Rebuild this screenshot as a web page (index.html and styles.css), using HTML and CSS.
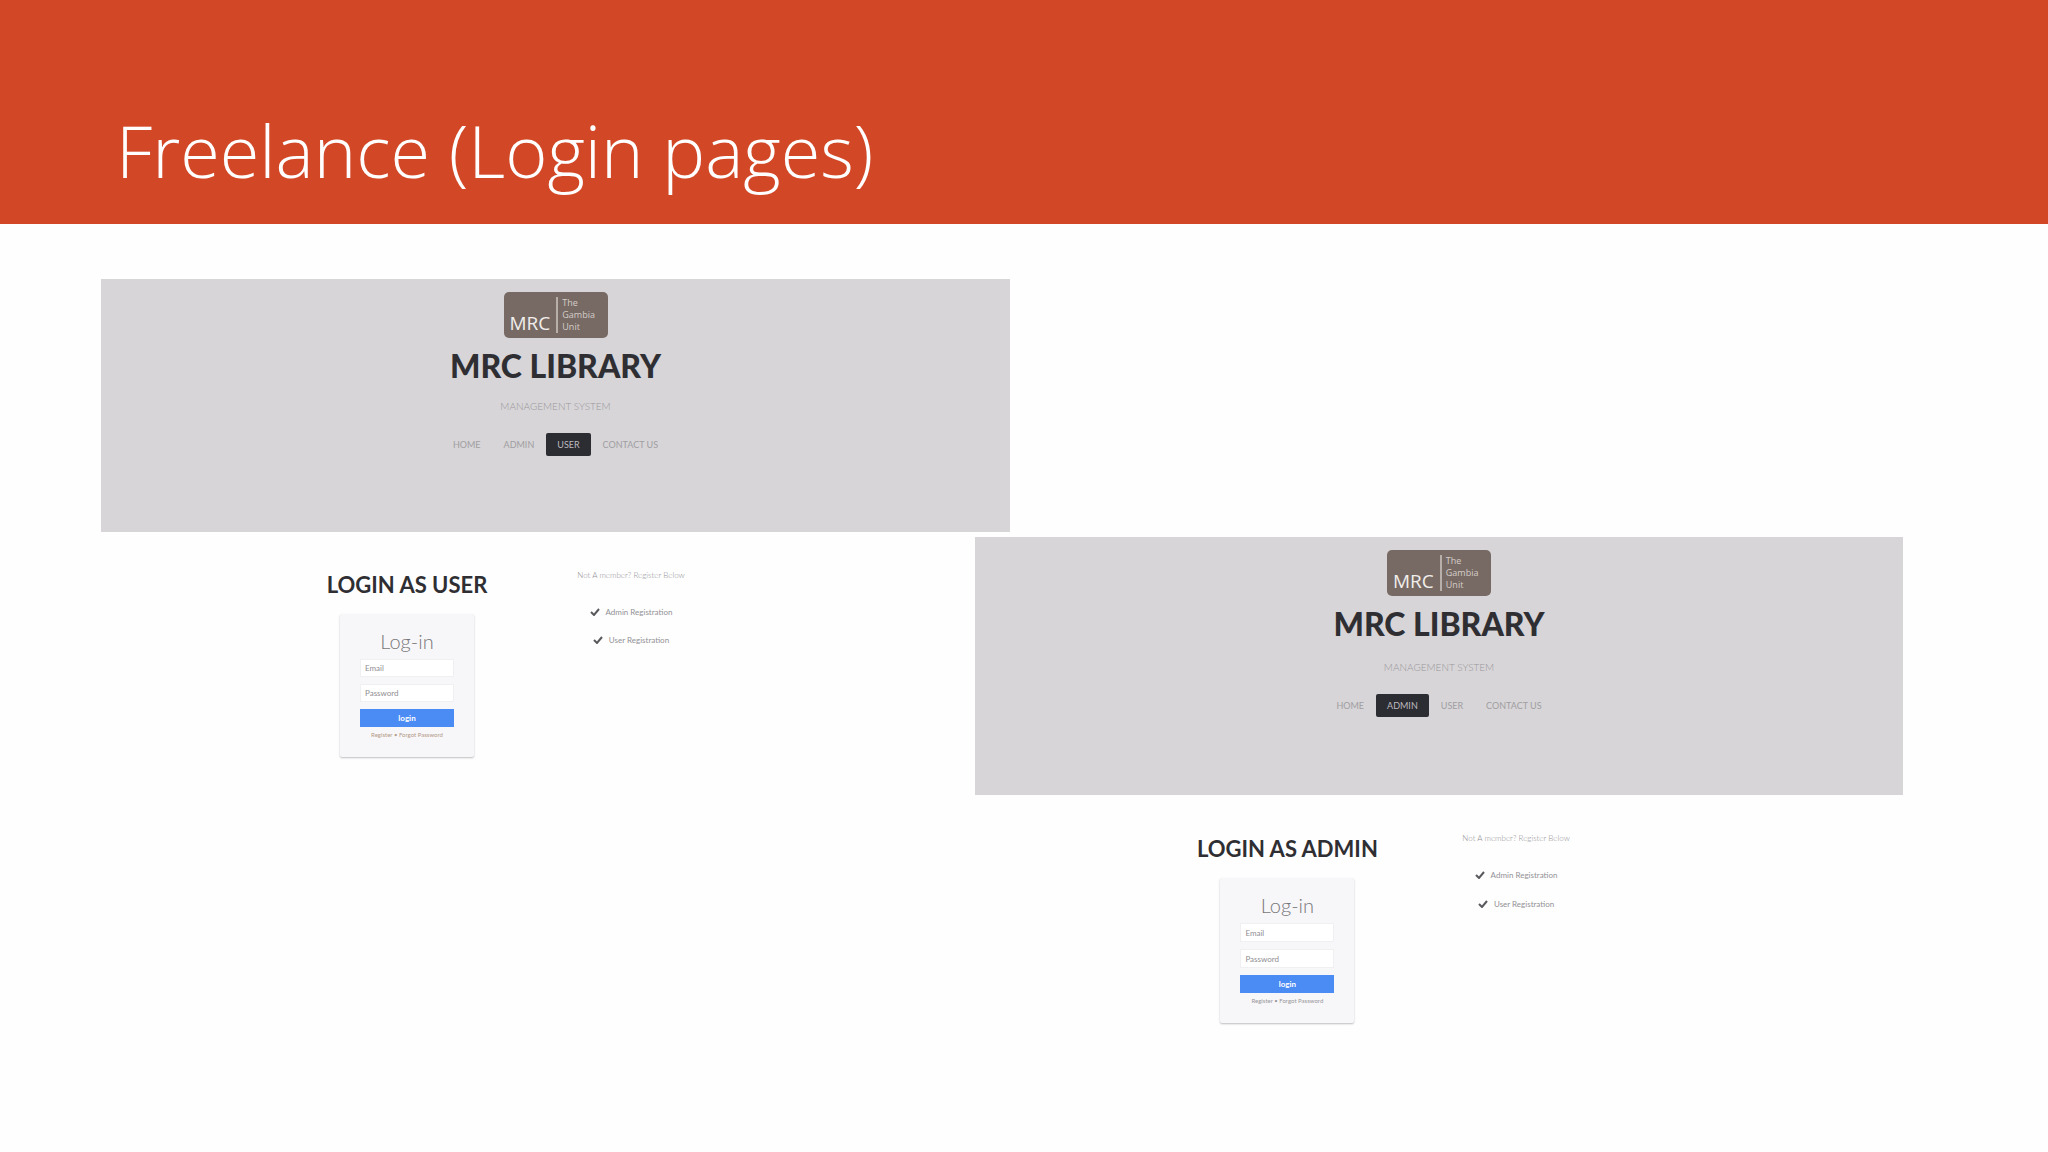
FILE: index.html
```html
<!DOCTYPE html>
<html lang="en">
<head>
<meta charset="utf-8">
<title>Freelance (Login pages)</title>
<link rel="stylesheet" href="styles.css">
</head>
<body>
<header class="slide-header">
  <h1 class="slide-title">Freelance (Login pages)</h1>
</header>
<main class="showcase">
  <section class="page page-user">
    <header class="banner">
      <div class="logo"><span class="logo-name">MRC</span><span class="logo-unit">The<br>Gambia<br>Unit</span></div>
      <h2 class="site-title">MRC LIBRARY</h2>
      <p class="tagline">MANAGEMENT SYSTEM</p>
      <nav class="menu">
        <a href="#">HOME</a>
        <a href="#">ADMIN</a>
        <a href="#" class="active">USER</a>
        <a href="#">CONTACT US</a>
      </nav>
    </header>
    <div class="content">
      <div class="login">
        <h3 class="login-title">LOGIN AS USER</h3>
        <form class="card">
          <h4 class="card-title">Log-in</h4>
          <input class="field" type="email" placeholder="Email" aria-label="Email">
          <input class="field" type="password" placeholder="Password" aria-label="Password">
          <button class="submit" type="button">login</button>
          <p class="help warm"><a href="#">Register</a> • <a href="#">Forgot Password</a></p>
        </form>
      </div>
      <aside class="register">
        <p class="question">Not A member? Register Below</p>
        <ul class="links">
          <li><svg class="tick" viewBox="0 0 10 8"><path d="M1 4 L4 7 L9 1"/></svg><a href="#">Admin Registration</a></li>
          <li><svg class="tick" viewBox="0 0 10 8"><path d="M1 4 L4 7 L9 1"/></svg><a href="#">User Registration</a></li>
        </ul>
      </aside>
    </div>
  </section>

  <section class="page page-admin">
    <header class="banner">
      <div class="logo"><span class="logo-name">MRC</span><span class="logo-unit">The<br>Gambia<br>Unit</span></div>
      <h2 class="site-title">MRC LIBRARY</h2>
      <p class="tagline">MANAGEMENT SYSTEM</p>
      <nav class="menu">
        <a href="#">HOME</a>
        <a href="#" class="active">ADMIN</a>
        <a href="#">USER</a>
        <a href="#">CONTACT US</a>
      </nav>
    </header>
    <div class="content">
      <div class="login">
        <h3 class="login-title">LOGIN AS ADMIN</h3>
        <form class="card">
          <h4 class="card-title">Log-in</h4>
          <input class="field" type="email" placeholder="Email" aria-label="Email">
          <input class="field" type="password" placeholder="Password" aria-label="Password">
          <button class="submit" type="button">login</button>
          <p class="help"><a href="#">Register</a> • <a href="#">Forgot Password</a></p>
        </form>
      </div>
      <aside class="register">
        <p class="question">Not A member? Register Below</p>
        <ul class="links">
          <li><svg class="tick" viewBox="0 0 10 8"><path d="M1 4 L4 7 L9 1"/></svg><a href="#">Admin Registration</a></li>
          <li><svg class="tick" viewBox="0 0 10 8"><path d="M1 4 L4 7 L9 1"/></svg><a href="#">User Registration</a></li>
        </ul>
      </aside>
    </div>
  </section>
</main>
</body>
</html>
```
FILE: styles.css
```css
* { box-sizing: border-box; margin: 0; padding: 0; }

body {
  background: #fefefe;
  font-family: Lato, "Liberation Sans", sans-serif;
  color: #2f2f33;
}

a { color: inherit; text-decoration: none; }

.slide-header {
  background: #d24726;
  padding: 102px 116px 26px;
}

.slide-title {
  font-family: "Open Sans", "Noto Sans", sans-serif;
  font-weight: 300;
  font-size: 72px;
  line-height: 96px;
  color: #fff;
}

/* The two pages share a row and overlap by one narrow column. */
.showcase {
  display: grid;
  grid-template-columns: 101fr 874fr 35fr 893fr 145fr;
  align-items: start;
  padding: 55px 0 96px;
}

.page { grid-row: 1; }

.page-user {
  grid-column: 2 / 4;
  --tagline-gap: 13px;
  --banner-bottom: 76px;
  --field: 18px;
  --login-top: 41px;
  --link-gap: 18px;
}

.page-admin {
  grid-column: 3 / 5;
  margin-top: 258px;
  --tagline-gap: 16px;
  --banner-bottom: 78px;
  --field: 19px;
  --login-top: 42px;
  --link-gap: 19px;
}

.banner {
  display: flex;
  flex-direction: column;
  align-items: center;
  background: #d7d5d8;
  padding: 13px 0 var(--banner-bottom);
}

.logo {
  display: flex;
  align-items: center;
  gap: 6px;
  width: 104px;
  height: 46px;
  padding: 4px 6px;
  border-radius: 5px;
  background: #776a64;
  color: #f1eeec;
  font-family: "Open Sans", sans-serif;
}

.logo-name {
  align-self: flex-end;
  font-size: 19px;
  line-height: 22px;
}

.logo-unit {
  border-left: 2px solid #b8afaa;
  padding-left: 4px;
  font-size: 9px;
  line-height: 12px;
  color: #d5cdc9;
}

.site-title {
  margin-top: 8px;
  font-weight: 900;
  font-size: 32px;
  line-height: 40px;
}

.tagline {
  margin-top: var(--tagline-gap);
  font-weight: 300;
  font-size: 10px;
  line-height: 14px;
  color: #99979a;
}

.menu {
  display: flex;
  gap: 1px;
  margin-top: 20px;
}

.menu a {
  padding: 0 11px;
  border-radius: 2px;
  font-size: 9px;
  line-height: 23px;
  color: #a09ea1;
}

.menu .active { background: #2c2c33; color: #bcbbbe; }

.content {
  display: grid;
  grid-template-columns: 194fr 224fr 224fr 267fr;
  align-items: start;
}

.login {
  grid-column: 2;
  display: flex;
  flex-direction: column;
  align-items: center;
  padding-top: var(--login-top);
}

.login-title {
  font-weight: 700;
  font-size: 22px;
  line-height: 24px;
  white-space: nowrap;
}

.card {
  display: flex;
  flex-direction: column;
  width: 134px;
  margin-top: 17px;
  padding: 15px 20px 17px;
  border-radius: 2px;
  background: #f7f6f8;
  box-shadow: 0 1px 2px #bdbcc0;
}

.card-title {
  margin-bottom: 6px;
  font-weight: 300;
  font-size: 20px;
  line-height: 24px;
  text-align: center;
  color: #77767a;
}

.field {
  width: 100%;
  height: var(--field);
  margin-bottom: 7px;
  padding: 0 4px;
  border: 1px solid #f0f0f2;
  background: #fff;
  font-family: inherit;
  font-size: 8px;
}

.field::placeholder { color: #8f8e92; }

.submit {
  height: 18px;
  border: 0;
  background: #4b8bf4;
  color: #fff;
  font-family: inherit;
  font-weight: 700;
  font-size: 8px;
}

.help {
  margin-top: 3px;
  font-size: 6px;
  line-height: 10px;
  text-align: center;
  white-space: nowrap;
  color: #98979b;
}

.warm { color: #b39a88; }

.register {
  grid-column: 3;
  padding-top: 38px;
  text-align: center;
  font-size: 8px;
  line-height: 10px;
  color: #929195;
}

.question { font-weight: 300; }

.links {
  display: flex;
  flex-direction: column;
  gap: var(--link-gap);
  margin-top: 27px;
  list-style: none;
}

.links li {
  display: flex;
  justify-content: center;
  align-items: center;
  gap: 6px;
}

.tick {
  width: 10px;
  height: 8px;
  fill: none;
  stroke: #5a5a5e;
  stroke-width: 2;
}
```
